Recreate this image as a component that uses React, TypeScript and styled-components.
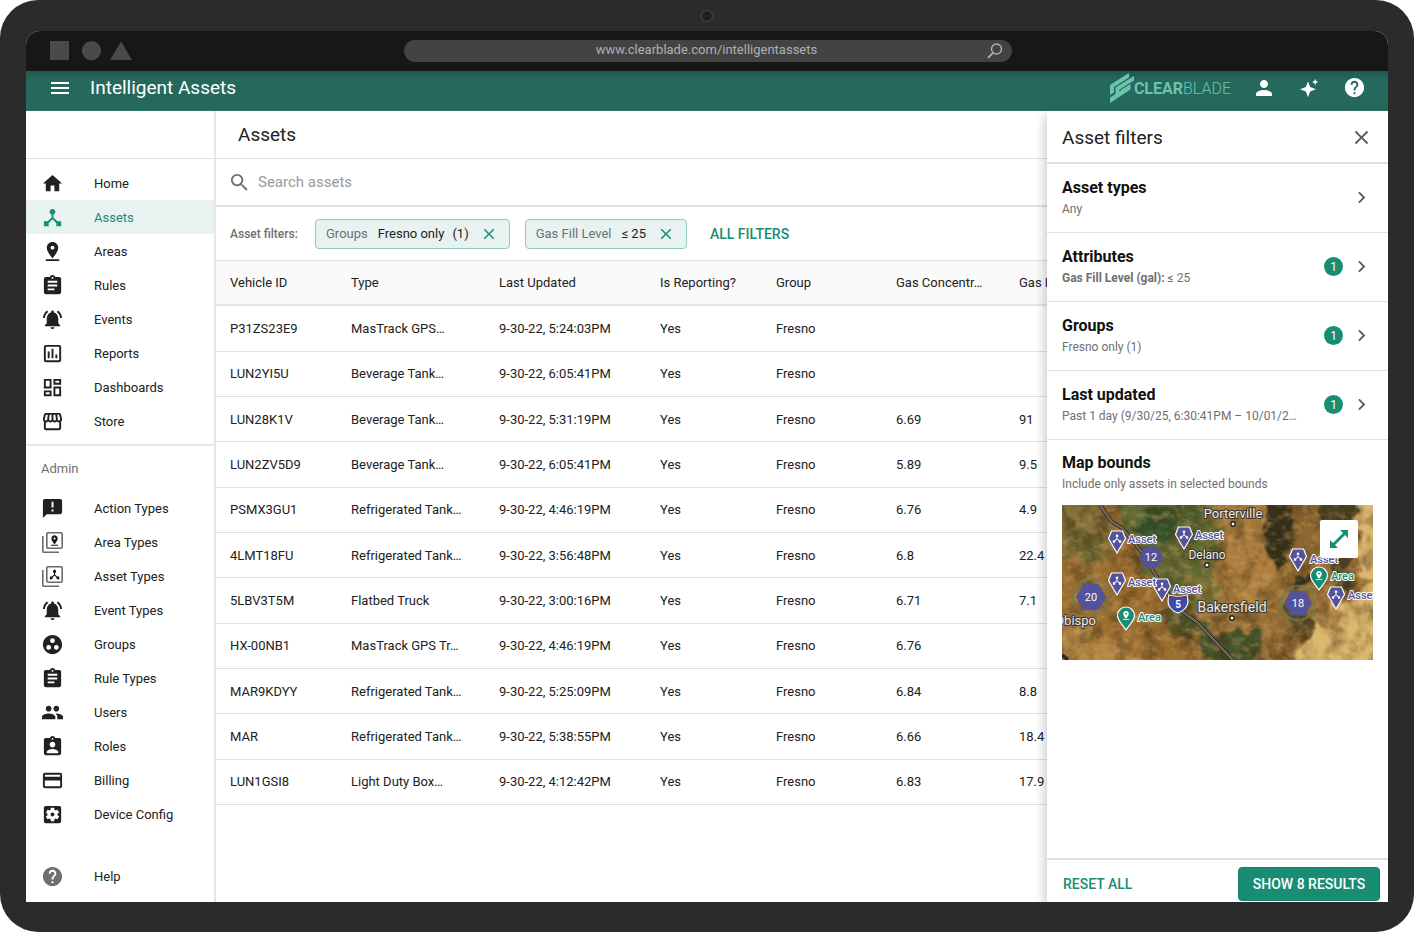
import React from "react";
import styled, { createGlobalStyle } from "styled-components";
import {
  MdHome, MdDeviceHub, MdPinDrop, MdAssignment, MdNotificationsActive,
  MdOutlineInsertChartOutlined, MdOutlineDashboard, MdOutlineStorefront,
  MdAnnouncement, MdGroupWork, MdPeople, MdAssignmentInd, MdCreditCard,
  MdSettingsApplications, MdHelp, MdMenu, MdPerson, MdSearch, MdClose,
  MdChevronRight,
} from "react-icons/md";

const GREEN = "#198c74";
const INK = "#212121";
const MUTED = "#6f6f6f";
const LINE = "#e0e0e0";

const GlobalStyle = createGlobalStyle`
  *, *::before, *::after { box-sizing: border-box; }
  body {
    margin: 0;
    background: #fff;
    font-family: Roboto, "Liberation Sans", sans-serif;
    font-size: 13px;
    color: ${INK};
  }
  button, input { font: inherit; color: inherit; }
  button { border: 0; background: none; padding: 0; cursor: pointer; }
  h1, h2, h3, p, ul { margin: 0; padding: 0; font-weight: 400; }
  ul { list-style: none; }
  svg { display: block; flex: none; }
`;

/* Device frame */

const Device = styled.div`
  min-height: 100vh;
  display: flex;
  flex-direction: column;
  padding: 0 26px 30px;
  border-radius: 38px;
  background: #2b2b2b;
`;

const Bezel = styled.div`
  height: 31px;
  display: flex;
  align-items: center;
  justify-content: center;
`;

const Camera = styled.span`
  width: 12px;
  height: 12px;
  border: 1px solid #4a4a4a;
  border-radius: 50%;
  background: #1f1f1f;
`;

const Screen = styled.div`
  flex: 1;
  display: flex;
  flex-direction: column;
  border-radius: 14px 14px 0 0;
  overflow: hidden;
  background: #fff;
`;

const BrowserBar = styled.div`
  height: 40px;
  display: grid;
  grid-template-columns: 1fr 608px 1fr;
  align-items: center;
  padding: 0 23px 0 24px;
  background: #171717;
`;

const Address = styled.div`
  height: 22px;
  display: flex;
  align-items: center;
  justify-content: space-between;
  padding: 0 8px;
  border-radius: 11px;
  background: #434343;
  color: #b0b0b0;
  font-size: 13px;
  line-height: 20px;
`;

const AddressText = styled.span`
  flex: 1;
  padding: 0 0 2px 16px;
  text-align: center;
`;

/* Application bar */

const AppBar = styled.header`
  height: 40px;
  display: flex;
  align-items: center;
  padding: 0 22px 6px;
  border-bottom: 1px solid #2f7466;
  background: linear-gradient(#20594d 0, #24695b 9px);
  color: #fff;
`;

const AppTitle = styled.h1`
  flex: 1;
  padding-left: 18px;
  font-size: 19px;
  line-height: 24px;
`;

const Brand = styled.div`
  display: flex;
  align-items: center;
  gap: 0;
  margin-right: 21px;
  color: #6cc3ad;
  font-size: 16px;
  line-height: 20px;
`;

const BrandStrong = styled.span`
  padding-top: 3px;
  font-weight: 700;
`;

const BrandLight = styled.span`
  padding-top: 3px;
  font-weight: 300;
`;

const BarActions = styled.div`
  display: flex;
  gap: 21px;
`;

const IconButton = styled.button<{ $tone?: string }>`
  display: grid;
  place-items: center;
  width: 24px;
  height: 24px;
  color: ${(p) => p.$tone ?? "inherit"};
`;

/* Page columns */

const Body = styled.div`
  flex: 1;
  display: flex;
  min-height: 0;
`;

const Sidebar = styled.nav`
  flex: none;
  width: 190px;
  display: flex;
  flex-direction: column;
  padding-bottom: 9px;
  border-right: 2px solid #e6e6e6;
`;

const SidebarTop = styled.div`
  height: 48px;
  border-bottom: 1px solid ${LINE};
`;

const NavList = styled.ul`
  padding: 7px 0 6px;
`;

const AdminList = styled(NavList)`
  flex: 1;
  padding: 0;
`;

const NavLink = styled.a<{ $active?: boolean }>`
  display: grid;
  grid-template-columns: 53px 1fr;
  align-items: center;
  height: 34px;
  padding-left: 15px;
  background: ${(p) => (p.$active ? "#e8f3f1" : "transparent")};
  color: ${(p) => (p.$active ? GREEN : INK)};
  text-decoration: none;
  font-size: 13px;
`;

const NavIcon = styled.span<{ $muted?: boolean }>`
  display: grid;
  place-items: center;
  width: 23px;
  color: ${(p) => (p.$muted ? MUTED : "inherit")};
`;

const SectionLabel = styled.p`
  padding: 15px 15px 14px;
  border-top: 2px solid #e8e8e8;
  color: ${MUTED};
  line-height: 16px;
`;

const Main = styled.main`
  flex: 1;
  min-width: 0;
  overflow: hidden;
`;

const PageHead = styled.div`
  height: 48px;
  display: flex;
  align-items: center;
  padding-left: 22px;
  border-bottom: 1px solid ${LINE};
`;

const PageTitle = styled.h2`
  font-size: 19px;
`;

const SearchRow = styled.label`
  height: 48px;
  display: flex;
  align-items: center;
  gap: 7px;
  padding-left: 12px;
  border-bottom: 2px solid ${LINE};
  color: ${MUTED};
`;

const SearchInput = styled.input`
  flex: 1;
  padding: 0;
  border: 0;
  outline: 0;
  background: transparent;
  font-size: 15px;
  &::placeholder { color: #9a9a9a; opacity: 1; }
`;

const FilterRow = styled.div`
  height: 53px;
  display: flex;
  align-items: center;
  gap: 15px;
  padding-left: 14px;
`;

const FilterLabel = styled.span`
  width: 70px;
  color: ${MUTED};
  font-size: 12px;
  font-weight: 500;
`;

const Chip = styled.span`
  height: 30px;
  display: flex;
  align-items: center;
  gap: 10px;
  padding: 0 10px;
  border: 1px solid #8fcabd;
  border-radius: 4px;
  background: #e8f3f1;
`;

const ChipName = styled.span`
  color: ${MUTED};
`;

const ChipValue = styled.span`
  display: flex;
  gap: 8px;
`;

const ChipClose = styled(IconButton)`
  width: 20px;
  height: 20px;
`;

const TextButton = styled.button`
  padding: 0 8px;
  color: ${GREEN};
  font-size: 14px;
  font-weight: 500;
  line-height: 20px;
  text-transform: uppercase;
`;

const Table = styled.table`
  width: 100%;
  min-width: 832px;
  height: 545px;
  table-layout: fixed;
  border-collapse: collapse;
  border-top: 1px solid ${LINE};
`;

const HeadCell = styled.th`
  height: 44px;
  padding: 0 0 0 14px;
  border-bottom: 2px solid #e6e6e6;
  background: #fafafa;
  font-weight: 400;
  text-align: left;
  white-space: nowrap;
  overflow: hidden;
`;

const Cell = styled.td`
  padding: 0 0 0 14px;
  border-bottom: 1px solid ${LINE};
  white-space: nowrap;
`;

/* Filter drawer */

const Drawer = styled.aside`
  z-index: 1;
  flex: none;
  width: 341px;
  display: flex;
  flex-direction: column;
  background: #fff;
  box-shadow: -2px 4px 10px rgba(0, 0, 0, 0.22);
`;

const DrawerHead = styled.div`
  height: 53px;
  display: flex;
  align-items: center;
  justify-content: space-between;
  padding: 1px 15px 0;
  border-bottom: 2px solid ${LINE};
`;

const DrawerTitle = styled.h2`
  font-size: 19px;
`;

const FilterItem = styled.button`
  width: 100%;
  height: 69px;
  display: flex;
  align-items: center;
  gap: 7px;
  padding: 0 15px 1px;
  border-bottom: 1px solid ${LINE};
  text-align: left;
`;

const FilterText = styled.span`
  flex: 1;
  min-width: 0;
  display: block;
`;

const ItemTitle = styled.strong`
  display: block;
  color: #111;
  font-size: 16px;
  font-weight: 700;
  line-height: 22px;
`;

const ItemNote = styled.span`
  display: block;
  color: ${MUTED};
  font-size: 12px;
  line-height: 20px;
  white-space: nowrap;
`;

const Count = styled.span`
  display: grid;
  place-items: center;
  width: 19px;
  height: 19px;
  border-radius: 50%;
  background: ${GREEN};
  color: #fff;
  font-size: 12px;
`;

const BoundsSection = styled.section`
  flex: 1;
  padding: 12px 15px 0;
`;

const MapFrame = styled.div`
  position: relative;
  margin-top: 11px;
  overflow: hidden;
  > svg { width: 100%; height: auto; }
`;

const ExpandButton = styled.button`
  position: absolute;
  top: 15px;
  right: 15px;
  display: grid;
  place-items: center;
  width: 38px;
  height: 38px;
  border-radius: 2px;
  background: #fff;
`;

const DrawerFoot = styled.div`
  height: 44px;
  display: flex;
  align-items: center;
  justify-content: space-between;
  padding: 6px 8px 0 8px;
  border-top: 2px solid ${LINE};
`;

const PrimaryButton = styled.button`
  width: 142px;
  height: 34px;
  border: 1px solid #12806a;
  border-radius: 4px;
  background: ${GREEN};
  color: #fff;
  font-size: 14px;
  font-weight: 500;
  text-transform: uppercase;
`;

/* Drawings */

const HUB = "M17 16l-4-4V8.82C14.16 8.4 15 7.3 15 6c0-1.66-1.34-3-3-3S9 4.34 9 6c0 1.3.84 2.4 2 2.82V12l-4 4H3v5h5v-3.05l4-4.2 4 4.2V21h5v-5h-4z";
const PIN = "M18 8c0-3.31-2.69-6-6-6S6 4.69 6 8c0 4.5 6 11 6 11s6-6.5 6-11zm-8 0c0-1.1.9-2 2-2s2 .9 2 2-.89 2-2 2c-1.1 0-2-.9-2-2zM5 20v2h14v-2H5z";
const ROAD = "M38 0L50 17 60 23 78 45 98 77 115 103 135 117 171 155";

const WindowShapes = () => (
  <svg width="82" height="20" viewBox="0 0 82 20" fill="#4a4a4a">
    <rect x="0" y="0" width="19" height="19" />
    <circle cx="41.500" cy="9.600" r="9.600" />
    <path d="M71 .5l11 18.500H60z" />
  </svg>
);

const AddressSearch = () => (
  <svg width="18" height="18" viewBox="0 0 18 18" fill="none" stroke="#b0b0b0" strokeWidth="1.400">
    <circle cx="10.500" cy="7" r="5" />
    <path d="M7 10.800l-5 5" strokeWidth="1.800" />
  </svg>
);

const StackIcon = ({ glyph }: { glyph: string }) => (
  <svg width="21" height="21" viewBox="0 0 21 21">
    <rect x="4.800" y="0.800" width="15.400" height="15.400" rx="1.200" fill="none" stroke="#6a6a6a" strokeWidth="1.600" />
    <path d="M0.800 4v15.200a1 1 0 0 0 1 1H17" fill="none" stroke="#6a6a6a" strokeWidth="1.600" />
    <path d={glyph} fill="#151515" transform="translate(6.300 2.300) scale(.52)" />
  </svg>
);

const BrandMark = () => (
  <svg width="24" height="30" viewBox="0 0 24 30" fill="#6cc3ad">
    <path d="M19 0v4.500L4 14v5.500L0 22V12z" />
    <path d="M24 3v4.500L9.500 16.500v3.500L5.500 22.500V14.500z" />
    <path d="M20.500 11v5.500L0 30v-5.500L11 17.500v-.800z" />
  </svg>
);

const Sparkles = () => (
  <svg width="20" height="20" viewBox="0 0 20 20" fill="#fff">
    <path d="M9 3.500l2.200 5.500 5.800 2.300-5.800 2.300L9 19.200l-2.200-5.600L1 11.300l5.800-2.300z" />
    <path d="M16.200 0.800l.9 2.300 2.300.9-2.300.9-.9 2.300-.9-2.300-2.300-.9 2.300-.9z" />
  </svg>
);

const ExpandArrows = () => (
  <svg width="20" height="20" viewBox="0 0 20 20" fill={GREEN}>
    <path d="M11 1h8v8l-3-3L6 16l3 3H1v-8l3 3L14 4z" />
  </svg>
);

const AssetPin = ({ x, y }: { x: number; y: number }) => (
  <g transform={`translate(${x} ${y})`}>
    <path d="M-5.500 0h11L8.500 7.500 0 22-8.500 7.500z" fill="#53529b" stroke="#fff" strokeWidth="1.200" strokeLinejoin="round" />
    <path d={HUB} fill="#fff" transform="translate(-5.500 2) scale(.46)" />
  </g>
);

const AreaPin = ({ x, y }: { x: number; y: number }) => (
  <g transform={`translate(${x} ${y})`}>
    <path d="M0 0a8.500 8.500 0 0 1 8.500 8.500C8.500 13.500 4 17 0 23-4 17-8.500 13.500-8.500 8.500A8.500 8.500 0 0 1 0 0z" fill={GREEN} stroke="#fff" strokeWidth="1.200" />
    <path d={PIN} fill="#fff" transform="translate(-5.500 3) scale(.46)" />
  </g>
);

const Cluster = ({ x, y, r, n, halo }: { x: number; y: number; r: number; n: number; halo?: boolean }) => {
  const h = r * 0.88;
  return (
    <g transform={`translate(${x} ${y})`}>
      {halo && <circle r={r + 3} fill="none" stroke="#6f7d4c" strokeOpacity=".7" strokeWidth="2.500" />}
      <path d={`M${-r} 0L${-r / 2} ${-h}H${r / 2}L${r} 0L${r / 2} ${h}H${-r / 2}z`} fill="#53529b" />
      <text y="4" textAnchor="middle" fontSize="11" fill="#fff">{n}</text>
    </g>
  );
};

const Town = ({ x, y, size, dot, children }: { x: number; y: number; size: number; dot: number; children: string }) => (
  <g>
    <text x={x} y={y} textAnchor="middle" fontSize={size} fill="#eeebe4" stroke="#3c382f" strokeWidth="2" paintOrder="stroke">{children}</text>
    <circle cx={x} cy={dot} r="2.200" fill="#fff" stroke="#222" strokeWidth="1.400" />
  </g>
);

const assetPins = [
  { x: 55, y: 26, lx: 66, ly: 38 },
  { x: 122, y: 22, lx: 133, ly: 34 },
  { x: 55, y: 68, lx: 66, ly: 81 },
  { x: 100, y: 74, lx: 111, ly: 88 },
  { x: 236, y: 44, lx: 248, ly: 58 },
  { x: 274, y: 82, lx: 286, ly: 94 },
];

const areaPins = [
  { x: 64, y: 102, lx: 76, ly: 116 },
  { x: 257, y: 62, lx: 269, ly: 75 },
];

const SatelliteMap = () => (
  <svg viewBox="0 0 311 155" role="img" aria-label="Map of assets around Bakersfield">
    <defs>
      <filter id="rough" x="-10%" y="-10%" width="120%" height="120%" colorInterpolationFilters="sRGB">
        <feTurbulence type="fractalNoise" baseFrequency=".05" numOctaves="5" seed="7" result="n" />
        <feDisplacementMap in="SourceGraphic" in2="n" scale="26" xChannelSelector="R" yChannelSelector="G" />
        <feGaussianBlur stdDeviation="1.200" />
      </filter>
      <filter id="grain" x="0" y="0" width="100%" height="100%" colorInterpolationFilters="sRGB">
        <feTurbulence type="fractalNoise" baseFrequency=".06 .05" numOctaves="6" seed="12" />
        <feColorMatrix values="0 0 0 0 .22  0 0 0 0 .16  0 0 0 0 .05  2.200 0 0 0 -.900" />
      </filter>
      <filter id="light" x="0" y="0" width="100%" height="100%" colorInterpolationFilters="sRGB">
        <feTurbulence type="fractalNoise" baseFrequency=".1 .13" numOctaves="5" seed="31" />
        <feColorMatrix values="0 0 0 0 .85  0 0 0 0 .68  0 0 0 0 .4  0 2.600 0 0 -1.200" />
      </filter>
    </defs>
    <rect width="311" height="155" fill="#9c7339" />
    <g filter="url(#rough)">
      <path d="M-10 -10H60L80 60L120 110 170 165H-10z" fill="#9a6d31" />
      <path d="M-10 -10H42L58 40 24 58-10 46z" fill="#84703a" />
      <path d="M0 18l30 8 16 30-30-6z" fill="#6b6230" />
      <path d="M48 -10H135L158 14 158 70 130 105 100 85 75 50z" fill="#616832" />
      <path d="M78 6h30l4 24-16 10-20-14z" fill="#33562f" />
      <path d="M112 -4h26l4 22-24 6z" fill="#4c5a2b" />
      <path d="M100 85L128 108 150 125 134 130 112 118z" fill="#4b552b" />
      <path d="M92 100l22 14 22 24-26-12z" fill="#5c5a2c" />
      <path d="M120 70l34 4 6 24-28 6z" fill="#7a7238" />
      <path d="M136 130l30-6 34 8-2 30h-44l-18-18z" fill="#43522a" />
      <path d="M165 -10H210V100H175L160 60z" fill="#ad7e40" />
      <path d="M202 -10H240L234 20 226 54 214 70 206 40z" fill="#35301d" />
      <path d="M258 -10H296L292 40 288 84 276 78 262 50z" fill="#4b4024" />
      <path d="M236 -10h22v60l-14 34-18-10z" fill="#8d6733" />
      <path d="M230 68l22 6-4 7-18-2z" fill="#2f2c1a" />
      <path d="M250 112L320 76V165H236z" fill="#dcb96e" />
      <path d="M256 100l30 12-16 14-20-8z" fill="#b28a48" />
      <path d="M222 96l26 10 8 24-22 10z" fill="#5c4926" />
      <path d="M210 120l22 8 4 30-18 2z" fill="#8b6430" />
      <path d="M294 -10H325V84L298 66z" fill="#dcb871" />
      <path d="M0 112L60 140 90 165H-10z" fill="#b48745" />
    </g>
    <rect width="311" height="155" filter="url(#grain)" opacity=".55" />
    <rect width="311" height="155" filter="url(#light)" opacity=".4" />
    <g fill="none" strokeLinejoin="round">
      <path d={`${ROAD}M0 150L6 155`} stroke="#2b2c33" strokeWidth="3.800" />
      <path d={ROAD} stroke="#b89a62" strokeWidth="1.800" />
      <path d={ROAD} stroke="#2b2c33" strokeWidth=".7" />
    </g>
    <Town x={171} y={13} size={13} dot={19}>Porterville</Town>
    <Town x={145} y={54} size={12} dot={60}>Delano</Town>
    <Town x={170} y={107} size={14} dot={113}>Bakersfield</Town>
    <text x="34" y="120" textAnchor="end" fontSize="13" fill="#eeebe4" stroke="#3c382f" strokeWidth="2" paintOrder="stroke">Obispo</text>
    <Cluster x={89} y={52} r={12} n={12} />
    <Cluster x={29} y={92} r={15} n={20} halo />
    <Cluster x={236} y={98} r={14} n={18} halo />
    {assetPins.map((p) => <AssetPin key={`${p.x}-${p.y}`} x={p.x} y={p.y} />)}
    {areaPins.map((p) => <AreaPin key={p.x} x={p.x} y={p.y} />)}
    <path d="M107 90Q116 93 125 90Q129 103 116 108Q103 103 107 90z" fill="#3c4ba6" stroke="#fff" strokeWidth="1.200" />
    <path d="M108 90.500Q116 93 124 90.500L125.500 93H106.500z" fill="#8a2f44" />
    <text x="116" y="103" textAnchor="middle" fontSize="10" fontWeight="700" fill="#fff">5</text>
    <g fontSize="11" fontWeight="500" stroke="#fff" strokeWidth="2" paintOrder="stroke" strokeLinejoin="round">
      {assetPins.map((p) => <text key={`${p.lx}-${p.ly}`} x={p.lx} y={p.ly} fill="#53529b">Asset</text>)}
      {areaPins.map((p) => <text key={p.lx} x={p.lx} y={p.ly} fill={GREEN}>Area</text>)}
    </g>
  </svg>
);

/* Data */

type NavEntry = { label: string; icon: React.ReactNode; active?: boolean };

const S = 23;

const navItems: NavEntry[] = [
  { label: "Home", icon: <MdHome size={S} /> },
  { label: "Assets", icon: <MdDeviceHub size={S} />, active: true },
  { label: "Areas", icon: <MdPinDrop size={S} /> },
  { label: "Rules", icon: <MdAssignment size={S} /> },
  { label: "Events", icon: <MdNotificationsActive size={S} /> },
  { label: "Reports", icon: <MdOutlineInsertChartOutlined size={S} /> },
  { label: "Dashboards", icon: <MdOutlineDashboard size={S} /> },
  { label: "Store", icon: <MdOutlineStorefront size={S} /> },
];

const adminItems: NavEntry[] = [
  { label: "Action Types", icon: <MdAnnouncement size={S} /> },
  { label: "Area Types", icon: <StackIcon glyph={PIN} /> },
  { label: "Asset Types", icon: <StackIcon glyph={HUB} /> },
  { label: "Event Types", icon: <MdNotificationsActive size={S} /> },
  { label: "Groups", icon: <MdGroupWork size={S} /> },
  { label: "Rule Types", icon: <MdAssignment size={S} /> },
  { label: "Users", icon: <MdPeople size={S} /> },
  { label: "Roles", icon: <MdAssignmentInd size={S} /> },
  { label: "Billing", icon: <MdCreditCard size={S} /> },
  { label: "Device Config", icon: <MdSettingsApplications size={S} /> },
];

const columns = [
  { label: "Vehicle ID", width: 121 },
  { label: "Type", width: 148 },
  { label: "Last Updated", width: 161 },
  { label: "Is Reporting?", width: 116 },
  { label: "Group", width: 120 },
  { label: "Gas Concentr…", width: 123 },
  { label: "Gas Fill Level" },
];

const rows = [
  ["P31ZS23E9", "MasTrack GPS…", "9-30-22, 5:24:03PM", "Yes", "Fresno", "", ""],
  ["LUN2YI5U", "Beverage Tank…", "9-30-22, 6:05:41PM", "Yes", "Fresno", "", ""],
  ["LUN28K1V", "Beverage Tank…", "9-30-22, 5:31:19PM", "Yes", "Fresno", "6.69", "91"],
  ["LUN2ZV5D9", "Beverage Tank…", "9-30-22, 6:05:41PM", "Yes", "Fresno", "5.89", "9.5"],
  ["PSMX3GU1", "Refrigerated Tank…", "9-30-22, 4:46:19PM", "Yes", "Fresno", "6.76", "4.9"],
  ["4LMT18FU", "Refrigerated Tank…", "9-30-22, 3:56:48PM", "Yes", "Fresno", "6.8", "22.4"],
  ["5LBV3T5M", "Flatbed Truck", "9-30-22, 3:00:16PM", "Yes", "Fresno", "6.71", "7.1"],
  ["HX-00NB1", "MasTrack GPS Tr…", "9-30-22, 4:46:19PM", "Yes", "Fresno", "6.76", ""],
  ["MAR9KDYY", "Refrigerated Tank…", "9-30-22, 5:25:09PM", "Yes", "Fresno", "6.84", "8.8"],
  ["MAR", "Refrigerated Tank…", "9-30-22, 5:38:55PM", "Yes", "Fresno", "6.66", "18.4"],
  ["LUN1GSI8", "Light Duty Box…", "9-30-22, 4:12:42PM", "Yes", "Fresno", "6.83", "17.9"],
];

const filters: { title: string; note: React.ReactNode; count?: number }[] = [
  { title: "Asset types", note: "Any" },
  { title: "Attributes", note: <><b>Gas Fill Level (gal):</b> ≤ 25</>, count: 1 },
  { title: "Groups", note: "Fresno only (1)", count: 1 },
  { title: "Last updated", note: "Past 1 day (9/30/25, 6:30:41PM – 10/01/2…", count: 1 },
];

const chips = [
  { name: "Groups", values: ["Fresno only", "(1)"] },
  { name: "Gas Fill Level", values: ["≤ 25"] },
];

const NavEntryRow = ({ label, icon, active }: NavEntry) => (
  <li>
    <NavLink href="#" $active={active} aria-current={active ? "page" : undefined}>
      <NavIcon>{icon}</NavIcon>
      {label}
    </NavLink>
  </li>
);

export default function App() {
  return (
    <>
      <GlobalStyle />
      <Device>
        <Bezel><Camera /></Bezel>
        <Screen>
          <BrowserBar>
            <WindowShapes />
            <Address>
              <AddressText>www.clearblade.com/intelligentassets</AddressText>
              <AddressSearch />
            </Address>
          </BrowserBar>
          <AppBar>
            <IconButton aria-label="Menu"><MdMenu size={24} /></IconButton>
            <AppTitle>Intelligent Assets</AppTitle>
            <Brand>
              <BrandMark />
              <BrandStrong>CLEAR</BrandStrong>
              <BrandLight>BLADE</BrandLight>
            </Brand>
            <BarActions>
              <IconButton aria-label="Account"><MdPerson size={24} /></IconButton>
              <IconButton aria-label="Assistant"><Sparkles /></IconButton>
              <IconButton aria-label="Help"><MdHelp size={23} /></IconButton>
            </BarActions>
          </AppBar>
          <Body>
            <Sidebar>
              <SidebarTop />
              <NavList>
                {navItems.map((item) => <NavEntryRow key={item.label} {...item} />)}
              </NavList>
              <SectionLabel>Admin</SectionLabel>
              <AdminList>
                {adminItems.map((item) => <NavEntryRow key={item.label} {...item} />)}
              </AdminList>
              <NavLink href="#">
                <NavIcon $muted><MdHelp size={S} /></NavIcon>
                Help
              </NavLink>
            </Sidebar>
            <Main>
              <PageHead><PageTitle>Assets</PageTitle></PageHead>
              <SearchRow>
                <MdSearch size={23} />
                <SearchInput type="search" placeholder="Search assets" aria-label="Search assets" />
              </SearchRow>
              <FilterRow>
                <FilterLabel>Asset filters:</FilterLabel>
                {chips.map((chip) => (
                  <Chip key={chip.name}>
                    <ChipName>{chip.name}</ChipName>
                    <ChipValue>{chip.values.map((v) => <span key={v}>{v}</span>)}</ChipValue>
                    <ChipClose $tone={GREEN} aria-label={`Remove ${chip.name} filter`}><MdClose size={18} /></ChipClose>
                  </Chip>
                ))}
                <TextButton>All filters</TextButton>
              </FilterRow>
              <Table>
                <colgroup>
                  {columns.map((c) => <col key={c.label} width={c.width} />)}
                </colgroup>
                <thead>
                  <tr>{columns.map((c) => <HeadCell key={c.label} scope="col">{c.label}</HeadCell>)}</tr>
                </thead>
                <tbody>
                  {rows.map((row) => (
                    <tr key={row[0]}>{row.map((value, i) => <Cell key={i}>{value}</Cell>)}</tr>
                  ))}
                </tbody>
              </Table>
            </Main>
            <Drawer>
              <DrawerHead>
                <DrawerTitle>Asset filters</DrawerTitle>
                <IconButton $tone="#5c5c5c" aria-label="Close filters"><MdClose size={23} /></IconButton>
              </DrawerHead>
              {filters.map((f) => (
                <FilterItem key={f.title}>
                  <FilterText>
                    <ItemTitle>{f.title}</ItemTitle>
                    <ItemNote>{f.note}</ItemNote>
                  </FilterText>
                  {f.count && <Count>{f.count}</Count>}
                  <MdChevronRight size={23} color="#5c5c5c" />
                </FilterItem>
              ))}
              <BoundsSection>
                <ItemTitle as="h3">Map bounds</ItemTitle>
                <ItemNote as="p">Include only assets in selected bounds</ItemNote>
                <MapFrame>
                  <SatelliteMap />
                  <ExpandButton aria-label="Expand map"><ExpandArrows /></ExpandButton>
                </MapFrame>
              </BoundsSection>
              <DrawerFoot>
                <TextButton>Reset all</TextButton>
                <PrimaryButton>Show 8 results</PrimaryButton>
              </DrawerFoot>
            </Drawer>
          </Body>
        </Screen>
      </Device>
    </>
  );
}
